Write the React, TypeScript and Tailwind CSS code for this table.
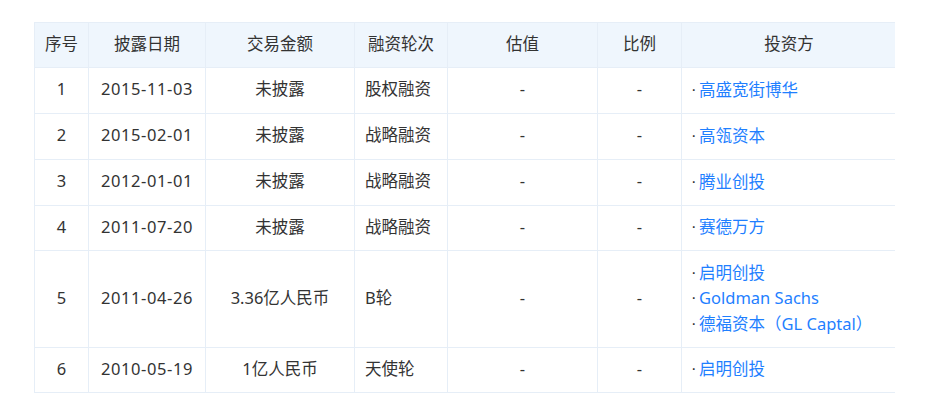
import React from "react";

type Row = {
  no: string;
  date: string;
  amount: string;
  round: string;
  investors: string[];
  h: string;
};

const rows: Row[] = [
  { no: "1", date: "2015-11-03", amount: "未披露", round: "股权融资", investors: ["高盛宽街博华"], h: "h-[46px]" },
  { no: "2", date: "2015-02-01", amount: "未披露", round: "战略融资", investors: ["高瓴资本"], h: "h-[46px]" },
  { no: "3", date: "2012-01-01", amount: "未披露", round: "战略融资", investors: ["腾业创投"], h: "h-[46px]" },
  { no: "4", date: "2011-07-20", amount: "未披露", round: "战略融资", investors: ["赛德万方"], h: "h-[45px]" },
  { no: "5", date: "2011-04-26", amount: "3.36亿人民币", round: "B轮", investors: ["启明创投", "Goldman Sachs", "德福资本（GL Captal）"], h: "h-[97px]" },
  { no: "6", date: "2010-05-19", amount: "1亿人民币", round: "天使轮", investors: ["启明创投"], h: "h-[45px]" },
];

const cell = "border border-[#e6eef7] align-middle pb-[2px]";

export default function App() {
  return (
    <div
      className="w-[926px] h-[413px] bg-white overflow-hidden pt-[22px] pl-[34px] text-[#333333] text-[16.5px]"
      style={{ fontFamily: '"Noto Sans", "Noto Sans CJK SC", sans-serif' }}
    >
      <div className="w-[861px] overflow-hidden">
        <table className="table-fixed border-collapse w-[862px]">
          <colgroup>
            <col className="w-[54px]" />
            <col className="w-[117px]" />
            <col className="w-[149px]" />
            <col className="w-[93px]" />
            <col className="w-[150px]" />
            <col className="w-[84px]" />
            <col className="w-[215px]" />
          </colgroup>
          <thead>
            <tr className="h-[45px] bg-[#eff6fd]">
              {["序号", "披露日期", "交易金额", "融资轮次", "估值", "比例", "投资方"].map((t) => (
                <th key={t} className={`${cell} font-normal text-center`}>
                  {t}
                </th>
              ))}
            </tr>
          </thead>
          <tbody>
            {rows.map((r) => (
              <tr key={r.no} className={r.h}>
                <td className={`${cell} text-center`}>{r.no}</td>
                <td className={`${cell} text-center tracking-[0.6px]`}>{r.date}</td>
                <td className={`${cell} text-center`}>{r.amount}</td>
                <td className={`${cell} text-left pl-[10px]`}>{r.round}</td>
                <td className={`${cell} text-center`}>-</td>
                <td className={`${cell} text-center`}>-</td>
                <td className={`${cell} text-left pl-[9px]`}>
                  <div className="flex flex-col leading-[25.5px]">
                    {r.investors.map((inv) => (
                      <div key={inv} className="flex items-center whitespace-nowrap">
                        <span
                          className="text-[#333333] w-[8px] shrink-0"
                          style={{ fontFamily: '"Liberation Sans", sans-serif' }}
                        >
                          ·
                        </span>
                        <span className="text-[#1f7fff]">{inv}</span>
                      </div>
                    ))}
                  </div>
                </td>
              </tr>
            ))}
          </tbody>
        </table>
      </div>
    </div>
  );
}
